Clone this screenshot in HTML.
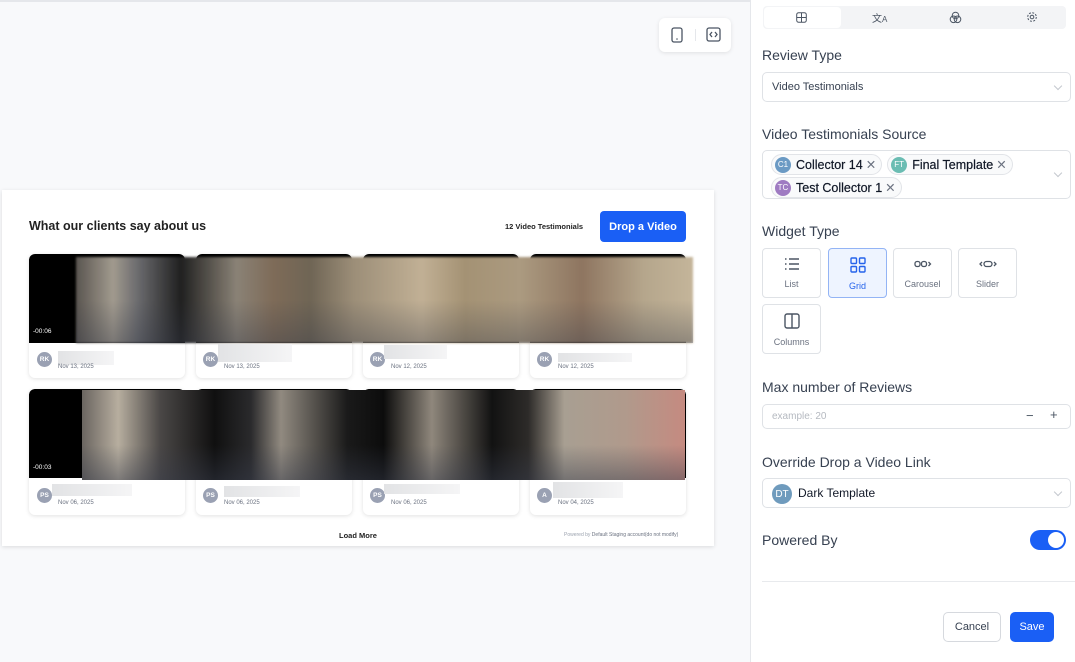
<!DOCTYPE html>
<html><head><meta charset="utf-8"><style>
*{box-sizing:border-box;margin:0;padding:0}
body{width:1075px;height:662px;overflow:hidden;background:#f8f9fb;font-family:"Liberation Sans",sans-serif;position:relative;color:#1f2937}
.abs{position:absolute}
.topline{left:0;top:0;width:750px;height:2px;background:#e5e7eb}
.toolbar{left:659px;top:18px;width:72px;height:34px;background:#fff;border-radius:6px;box-shadow:0 1px 4px rgba(0,0,0,.1)}
.preview{left:2px;top:190px;width:712px;height:356px;background:#fff;box-shadow:0 1px 4px rgba(0,0,0,.12)}
.card{background:#fff;border-radius:6px;box-shadow:0 1px 4px rgba(0,0,0,.12);overflow:hidden}
.vid{background:#000;height:89px;border-radius:5px 5px 0 0}
.av{width:15px;height:15px;border-radius:50%;background:#9aa1b3;color:#fff;font-size:6.5px;font-weight:bold;display:flex;align-items:center;justify-content:center}
.date{font-size:6px;color:#6b7280}
.ph{height:14px;background:linear-gradient(90deg,#e2e3e5,#f5f5f6)}
.panel{left:750px;top:0;width:325px;height:662px;background:#fff;border-left:1px solid #e5e7eb}
.lbl{font-size:14px;color:#374151;left:762px}
.box{left:762px;width:309px;border:1px solid #dfe2e6;border-radius:5px;background:#fff}
.chev{position:absolute;right:9px;width:6px;height:6px;border-right:1px solid #c4c8ce;border-bottom:1px solid #c4c8ce;transform:rotate(45deg)}
.wb{width:59px;height:50px;border:1px solid #dfe2e6;border-radius:4px;background:#fff;font-size:9px;color:#6b7280;text-align:center;padding-top:8px}
.wb svg{display:block;margin:0 auto 8px}
.chip{display:inline-flex;align-items:center;height:21px;border:1px solid #e2e4e8;border-radius:11px;background:#f9fafb;padding:0 5px 0 3px;font-size:12.5px;color:#111827;margin-right:5px;-webkit-text-stroke:.2px #111827}
.chip i{width:16px;height:16px;border-radius:50%;color:#fff;font-size:8px;font-style:normal;display:flex;align-items:center;justify-content:center;margin-right:5px;-webkit-text-stroke:0}
.chip b{font-weight:normal;color:#6b7280;margin-left:3px;-webkit-text-stroke:0}
</style></head><body>
<div class="abs topline"></div>
<div class="abs toolbar">
<svg class="abs" style="left:12px;top:9px" width="12" height="16" viewBox="0 0 12 16"><rect x="1" y="1" width="10" height="14" rx="2" fill="none" stroke="#4b5563" stroke-width="1.3"/><circle cx="6" cy="12" r=".8" fill="#4b5563"/></svg>
<div class="abs" style="left:36px;top:11px;width:1px;height:12px;background:#e5e7eb"></div>
<svg class="abs" style="left:47px;top:9px" width="15" height="15" viewBox="0 0 15 15"><rect x="1" y="1" width="13" height="13" rx="2" fill="none" stroke="#4b5563" stroke-width="1.3"/><path d="M6 5 4 7.5 6 10M9 5l2 2.5L9 10" fill="none" stroke="#4b5563" stroke-width="1.3"/></svg>
</div>

<div class="abs preview"></div>
<div class="abs" style="left:29px;top:219px;font-size:12.5px;font-weight:bold;color:#222">What our clients say about us</div>
<div class="abs" style="left:505px;top:222px;font-size:7.5px;font-weight:bold;color:#222">12 Video Testimonials</div>
<div class="abs" style="left:600px;top:211px;width:86px;height:31px;background:#1a5ff5;border-radius:4px;color:#fff;font-size:11px;font-weight:bold;display:flex;align-items:center;justify-content:center">Drop a Video</div>

<div class="abs card" style="left:29px;top:254px;width:156px;height:124px"><div class="vid"></div></div>
<div class="abs card" style="left:196px;top:254px;width:156px;height:124px"><div class="vid"></div></div>
<div class="abs card" style="left:363px;top:254px;width:156px;height:124px"><div class="vid"></div></div>
<div class="abs card" style="left:530px;top:254px;width:156px;height:124px"><div class="vid"></div></div>
<div class="abs" style="left:76px;top:257px;width:617px;height:86px;background:linear-gradient(90deg,#5a5550 0%,#a19a8e 6%,#6b6b6e 10%,#202020 17%,#8a8276 26%,#7e6b58 32%,#6f6555 38%,#9c8e78 45%,#c1b095 56%,#a49274 63%,#ab9a80 72%,#8e7560 82%,#b5a68c 92%,#c4b59a 100%);filter:blur(1px)"></div>
<div class="abs" style="left:76px;top:300px;width:617px;height:43px;background:linear-gradient(180deg,rgba(40,45,60,0),rgba(50,55,70,.35))"></div>
<div class="abs" style="left:33px;top:328px;color:#fff;font-size:6.5px">-00:06</div>

<div class="abs card" style="left:29px;top:389px;width:156px;height:126px"><div class="vid"></div></div>
<div class="abs card" style="left:196px;top:389px;width:156px;height:126px"><div class="vid"></div></div>
<div class="abs card" style="left:363px;top:389px;width:156px;height:126px"><div class="vid"></div></div>
<div class="abs card" style="left:530px;top:389px;width:156px;height:126px"><div class="vid"></div></div>
<div class="abs" style="left:82px;top:390px;width:603px;height:90px;background:linear-gradient(90deg,#6a6560 0%,#b7ae9f 6%,#4a4746 13%,#101010 22%,#2a2a2c 28%,#918a80 33%,#1a1a1a 44%,#0c0c0c 50%,#8f877c 58%,#121212 68%,#2d2b29 74%,#a89f92 80%,#b09a8c 90%,#c58a80 100%)"></div>
<div class="abs" style="left:82px;top:445px;width:603px;height:35px;background:linear-gradient(180deg,rgba(50,55,70,0),rgba(55,60,75,.45))"></div>
<div class="abs" style="left:33px;top:464px;color:#fff;font-size:6.5px">-00:03</div>

<div class="abs av" style="left:37px;top:352px">RK</div><div class="abs ph" style="left:58px;top:351px;width:56px"></div><div class="abs date" style="left:58px;top:364px">Nov 13, 2025</div>
<div class="abs av" style="left:203px;top:352px">RK</div><div class="abs ph" style="left:218px;top:344px;width:74px;height:18px"></div><div class="abs date" style="left:224px;top:364px">Nov 13, 2025</div>
<div class="abs av" style="left:370px;top:352px">RK</div><div class="abs ph" style="left:384px;top:345px;width:63px"></div><div class="abs date" style="left:391px;top:364px">Nov 12, 2025</div>
<div class="abs av" style="left:537px;top:352px">RK</div><div class="abs ph" style="left:558px;top:353px;width:74px;height:9px"></div><div class="abs date" style="left:558px;top:364px">Nov 12, 2025</div>
<div class="abs av" style="left:37px;top:488px">PS</div><div class="abs ph" style="left:52px;top:484px;width:80px;height:12px"></div><div class="abs date" style="left:58px;top:500px">Nov 06, 2025</div>
<div class="abs av" style="left:203px;top:488px">PS</div><div class="abs ph" style="left:224px;top:486px;width:76px;height:11px"></div><div class="abs date" style="left:224px;top:500px">Nov 06, 2025</div>
<div class="abs av" style="left:370px;top:488px">PS</div><div class="abs ph" style="left:384px;top:484px;width:76px;height:10px"></div><div class="abs date" style="left:391px;top:500px">Nov 06, 2025</div>
<div class="abs av" style="left:537px;top:488px">A</div><div class="abs ph" style="left:553px;top:482px;width:70px;height:16px"></div><div class="abs date" style="left:558px;top:500px">Nov 04, 2025</div>

<div class="abs" style="left:339px;top:531px;font-size:7.5px;font-weight:bold;color:#222">Load More</div>
<div class="abs" style="left:564px;top:532px;font-size:5px;color:#9ca3af">Powered by <span style="color:#6b7280">Default Staging account(do not modify)</span></div>

<div class="abs panel"></div>
<div class="abs" style="left:763px;top:6px;width:303px;height:23px;background:#f3f4f6;border-radius:4px"></div>
<div class="abs" style="left:764px;top:7px;width:77px;height:21px;background:#fff;border-radius:4px"></div>
<svg class="abs" style="left:796px;top:12px" width="11" height="11" viewBox="0 0 11 11"><rect x=".7" y=".7" width="9.6" height="9.6" rx="2" fill="none" stroke="#4b5563" stroke-width="1"/><path d="M5.5 1v9M1 5.5h9" stroke="#4b5563" stroke-width="1"/></svg>
<div class="abs" style="left:872px;top:10px;font-size:10px;color:#4b5563">文<span style="font-size:8px">A</span></div>
<svg class="abs" style="left:949px;top:11px" width="13" height="13" viewBox="0 0 13 13"><g fill="none" stroke="#4b5563" stroke-width="1"><circle cx="6.5" cy="4.5" r="3.3"/><circle cx="4.5" cy="8.3" r="3.3"/><circle cx="8.5" cy="8.3" r="3.3"/></g></svg>
<svg class="abs" style="left:1026px;top:11px" width="12" height="12" viewBox="0 0 12 12"><g fill="none" stroke="#4b5563" stroke-width="1"><circle cx="6" cy="6" r="1.8"/><circle cx="6" cy="6" r="4.3" stroke-dasharray="2 1.4"/></g></svg>

<div class="abs lbl" style="top:47px">Review Type</div>
<div class="abs box" style="top:72px;height:30px"><div class="abs" style="left:9px;top:8px;font-size:11px;color:#374151">Video Testimonials</div><div class="chev" style="top:10px"></div></div>

<div class="abs lbl" style="top:126px">Video Testimonials Source</div>
<div class="abs box" style="top:150px;height:49px;padding:3px 8px">
<div style="display:flex;flex-wrap:wrap;row-gap:2px;width:280px">
<span class="chip"><i style="background:#6b9ac4">C1</i>Collector 14<b>✕</b></span>
<span class="chip"><i style="background:#6bbdb3">FT</i>Final Template<b>✕</b></span>
<span class="chip"><i style="background:#9f7bc2">TC</i>Test Collector 1<b>✕</b></span>
</div><div class="chev" style="top:19px"></div></div>

<div class="abs lbl" style="top:223px">Widget Type</div>
<div class="abs wb" style="left:762px;top:248px"><svg width="16" height="14" viewBox="0 0 16 14"><g stroke="#4b5563" stroke-width="1.5"><path d="M1 2h1.5M1 7h1.5M1 12h1.5M5 2h10M5 7h10M5 12h10"/></g></svg>List</div>
<div class="abs wb" style="left:828px;top:248px;background:#eef4ff;border-color:#93b4f5;color:#2563eb"><svg width="16" height="16" viewBox="0 0 16 16"><g fill="none" stroke="#2563eb" stroke-width="1.4"><rect x="1" y="1" width="5.5" height="5.5" rx="1"/><rect x="9.5" y="1" width="5.5" height="5.5" rx="1"/><rect x="1" y="9.5" width="5.5" height="5.5" rx="1"/><rect x="9.5" y="9.5" width="5.5" height="5.5" rx="1"/></g></svg>Grid</div>
<div class="abs wb" style="left:893px;top:248px"><svg width="18" height="14" viewBox="0 0 18 14"><g fill="none" stroke="#4b5563" stroke-width="1.3"><rect x="1" y="4.5" width="5" height="5" rx="2"/><rect x="7.5" y="4.5" width="5" height="5" rx="2"/><path d="M14.5 5l2 2-2 2"/></g></svg>Carousel</div>
<div class="abs wb" style="left:958px;top:248px"><svg width="18" height="14" viewBox="0 0 18 14"><g fill="none" stroke="#4b5563" stroke-width="1.3"><rect x="5" y="4.5" width="8" height="5" rx="2.5"/><path d="M3 5 1 7l2 2M15 5l2 2-2 2"/></g></svg>Slider</div>
<div class="abs wb" style="left:762px;top:304px"><svg width="16" height="16" viewBox="0 0 16 16"><g fill="none" stroke="#4b5563" stroke-width="1.4"><rect x="1" y="1" width="14" height="14" rx="2"/><path d="M8 1v14"/></g></svg>Columns</div>

<div class="abs lbl" style="top:379px">Max number of Reviews</div>
<div class="abs box" style="top:404px;height:25px"><div class="abs" style="left:9px;top:6px;font-size:10px;color:#b5b9c0">example: 20</div><div class="abs" style="left:263px;top:3px;font-size:13px;color:#4b5563">−</div><div class="abs" style="left:287px;top:2px;font-size:13px;color:#4b5563">+</div></div>

<div class="abs lbl" style="top:454px">Override Drop a Video Link</div>
<div class="abs box" style="top:478px;height:30px"><div class="abs" style="left:9px;top:5px;width:20px;height:20px;border-radius:50%;background:#6f9bbd;color:#fff;font-size:10px;display:flex;align-items:center;justify-content:center">DT</div><div class="abs" style="left:35px;top:7px;font-size:12px;color:#111827">Dark Template</div><div class="chev" style="top:10px"></div></div>

<div class="abs lbl" style="top:532px">Powered By</div>
<div class="abs" style="left:1030px;top:530px;width:36px;height:20px;border-radius:10px;background:#1a5ff5"><div class="abs" style="left:18px;top:2px;width:16px;height:16px;border-radius:50%;background:#fff"></div></div>
<div class="abs" style="left:762px;top:581px;width:313px;height:1px;background:#e8eaed"></div>
<div class="abs" style="left:943px;top:612px;width:58px;height:30px;border:1px solid #d6d9de;border-radius:5px;font-size:11px;color:#374151;display:flex;align-items:center;justify-content:center">Cancel</div>
<div class="abs" style="left:1010px;top:612px;width:44px;height:30px;background:#1a5ff5;border-radius:5px;font-size:11px;color:#fff;display:flex;align-items:center;justify-content:center">Save</div>
</body></html>
